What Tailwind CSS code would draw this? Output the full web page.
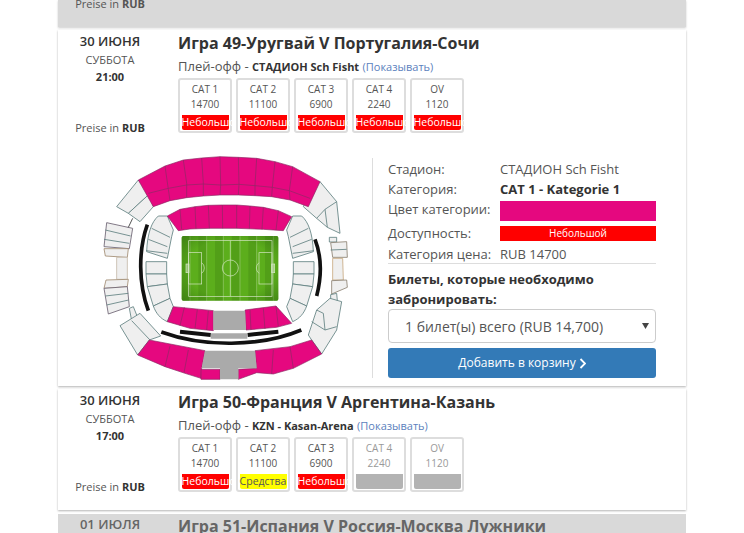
<!DOCTYPE html>
<html lang="ru">
<head>
<meta charset="UTF-8">
<title>Игры</title>
<script src="https://cdn.jsdelivr.net/npm/@tailwindcss/browser@4"></script>
</head>
<body class="bg-white overflow-hidden h-[533px] font-['Open_Sans','Noto_Sans',sans-serif] text-[#333]">
<div class="w-[628px] ml-[58px]">

  <!-- предыдущая игра -->
  <div class="h-[27px] bg-[#d9d9d9] shadow-[0_1px_2px_rgba(0,0,0,0.2)] flex">
    <div class="w-[104px] text-center text-[11px] leading-[8px] text-[#555]">Preise in <b>RUB</b></div>
  </div>

  <!-- игра 49 -->
  <div class="mt-[3px] bg-white shadow-[0_1px_2px_rgba(0,0,0,0.3)]">
    <div class="flex h-[117px]">
      <div class="w-[104px] flex flex-col items-center text-center">
        <div class="text-[13px] font-semibold leading-[18px] mt-[2px]">30 ИЮНЯ</div>
        <div class="text-[11px] leading-[16px] mt-[2px] text-[#555]">СУББОТА</div>
        <div class="text-[11px] font-bold leading-[16px] mt-[1px]">21:00</div>
        <div class="text-[11px] leading-[16px] mt-[35px] text-[#555]">Preise in <b class="text-[#333]">RUB</b></div>
      </div>
      <div class="ml-[16px]">
        <div class="text-[16px] font-bold leading-[22px] mt-[2px] whitespace-nowrap">Игра 49-Уругвай V Португалия-Сочи</div>
        <div class="text-[13px] h-[16px] leading-[16px] mt-[4px] whitespace-nowrap text-[#555]">Плей-офф - <b class="text-[11px] text-[#333]">СТАДИОН Sch Fisht</b> <span class="text-[11px] text-[#5b7fbd]">(Показывать)</span></div>
        <div class="flex gap-[4px] mt-[4px]">
          <div class="w-[54px] h-[55px] border-2 border-[#ddd] rounded-[3px] flex flex-col items-center text-[10px] leading-[15px] text-[#555] pt-[2px]"><span>CAT 1</span><span>14700</span><div class="mt-[3px] w-[47px] h-[15px] bg-[#ff0000] text-white text-[10.5px] leading-[15px] rounded-b-[2px] whitespace-nowrap text-left">Небольшой</div></div>
          <div class="w-[54px] h-[55px] border-2 border-[#ddd] rounded-[3px] flex flex-col items-center text-[10px] leading-[15px] text-[#555] pt-[2px]"><span>CAT 2</span><span>11100</span><div class="mt-[3px] w-[47px] h-[15px] bg-[#ff0000] text-white text-[10.5px] leading-[15px] rounded-b-[2px] whitespace-nowrap text-left">Небольшой</div></div>
          <div class="w-[54px] h-[55px] border-2 border-[#ddd] rounded-[3px] flex flex-col items-center text-[10px] leading-[15px] text-[#555] pt-[2px]"><span>CAT 3</span><span>6900</span><div class="mt-[3px] w-[47px] h-[15px] bg-[#ff0000] text-white text-[10.5px] leading-[15px] rounded-b-[2px] whitespace-nowrap text-left">Небольшой</div></div>
          <div class="w-[54px] h-[55px] border-2 border-[#ddd] rounded-[3px] flex flex-col items-center text-[10px] leading-[15px] text-[#555] pt-[2px]"><span>CAT 4</span><span>2240</span><div class="mt-[3px] w-[47px] h-[15px] bg-[#ff0000] text-white text-[10.5px] leading-[15px] rounded-b-[2px] whitespace-nowrap text-left">Небольшой</div></div>
          <div class="w-[54px] h-[55px] border-2 border-[#ddd] rounded-[3px] flex flex-col items-center text-[10px] leading-[15px] text-[#555] pt-[2px]"><span>OV</span><span>1120</span><div class="mt-[3px] w-[47px] h-[15px] bg-[#ff0000] text-white text-[10.5px] leading-[15px] rounded-b-[2px] whitespace-nowrap text-left">Небольшой</div></div>
        </div>
      </div>
    </div>

    <!-- схема стадиона и форма -->
    <div class="flex h-[239px]">
      <div class="w-[314px] shrink-0 pl-[32px] pt-[3px]">
        <svg width="280" height="235" viewBox="0 0 840 705">
          <defs>
            <pattern id="stripes" width="50" height="10" patternUnits="userSpaceOnUse" x="275">
              <rect width="25" height="10" fill="#529f18"/><rect x="25" width="25" height="10" fill="#5cae1c"/>
            </pattern>
            <radialGradient id="vig" cx="50%" cy="50%" r="68%">
              <stop offset="65%" stop-color="#2f6a10" stop-opacity="0"/><stop offset="100%" stop-color="#2f6a10" stop-opacity="0.5"/>
            </radialGradient>
            <g id="innerstand" fill="#efefef" stroke="#5f7f7f" stroke-width="2.5">
              <path d="M232 198L205 198C185 215 172 250 170 305L232 325L245 260L250 240Z"/>
              <path d="M185 235L240 262M175 268L232 290M168 302L232 310" fill="none"/>
              <path d="M168 335H230V372H168Z"/>
              <path d="M168 372H230L232 402L172 410Z"/>
              <path d="M172 410L232 402L240 445L190 468Z"/>
              <path d="M190 468L240 445L250 470L232 515C210 505 198 490 190 468Z"/>
            </g>
          </defs>

          <use href="#innerstand"/>
          <use href="#innerstand" transform="translate(840 0) scale(-1 1)"/>

          <!-- левая внешняя трибуна -->
          <g fill="#efefef" stroke="#5f7f7f" stroke-width="2.5">
            <path d="M80 170L145 90L178 132L115 190Z"/>
            <path d="M115 190L178 132L190 170L150 215Z"/>
            <path d="M50 218L128 235L118 296L42 290Z" stroke="#6a6070"/>
            <path d="M46 240L122 258M42 268L118 280"/>
            <path d="M42 296L115 296L112 322L46 318Z" stroke="#a08a70"/>
            <path d="M80 322L112 322L112 388L80 388Z" stroke="#c4b8a8"/>
            <path d="M48 390L115 388L112 410L42 415Z" stroke="#a08a70"/>
            <path d="M42 415L112 410L118 470L55 492Z" stroke="#6a6070"/>
            <path d="M46 438L115 430M50 465L116 450"/>
            <path d="M118 475L130 470L142 500L125 512Z"/>
            <path d="M90 527L150 490L212 558L178 570L143 615Z"/>
            <path d="M125 512L180 570"/>
            <path d="M128 205L115 232" fill="none" stroke="#333"/>
          </g>

          <!-- правая внешняя трибуна -->
          <g fill="#efefef" stroke="#5f7f7f" stroke-width="2.5">
            <path d="M660 125L690 95L740 155L750 250L712 232L680 205L640 170Z"/>
            <path d="M680 205L705 178L740 155M705 178L712 232" fill="none"/>
            <path d="M718 262L740 262L740 276L718 276Z"/>
            <path d="M722 278L770 275L772 322L728 322Z" stroke="#8a8070"/>
            <path d="M722 300L770 298" fill="none"/>
            <path d="M728 325H758L760 390H728Z" stroke="#c8a880"/>
            <path d="M725 392L770 390L772 412L725 432Z" stroke="#8a8070"/>
            <path d="M722 434L740 430L742 452L722 452Z"/>
            <path d="M655 555L680 480L720 445L755 455L740 540L695 612L665 570Z"/>
            <path d="M665 515L705 540L740 530M680 480L700 490L705 540" fill="none"/>
          </g>

          <g fill="#e5087f" stroke="#8b2a63" stroke-width="2">
            <path d="M145 90L225 48L280 30L335 24L390 20L445 22L500 25L555 35L608 50L690 95L655 170L600 150L545 140L495 137L445 135L390 135L340 138L290 143L240 152L190 170Z"/>
            <path fill="none" d="M225 48L235 118L240 152M280 30L290 100L290 143M335 24L340 100L340 138M390 20L392 105L390 135M445 22L447 103L445 135M500 25L495 105L495 137M555 35L547 112L545 140M608 50L598 122L600 150M175 130L235 115L290 105L340 102L392 105L447 103L495 107L547 112L598 122L660 145"/>
            <path d="M232 198L270 178L315 170L355 166L397 165L440 165L480 168L520 172L565 182L605 200L580 242L520 238L440 235L360 235L300 237L265 242Z"/>
            <path fill="none" d="M270 178L275 238M315 170L318 236M355 166L358 235M397 165L398 235M440 165L440 235M480 168L478 236M520 172L516 238M565 182L558 240"/>
            <path d="M232 515L250 470L370 482L370 542L300 535Z"/>
            <path fill="none" d="M283 472L270 527M322 478L315 535M355 482L350 540"/>
            <path d="M465 480L558 468L605 520L560 532L468 540Z"/>
            <path fill="none" d="M480 480L483 540M520 475L525 537M558 468L565 530"/>
            <path d="M178 570L345 602L335 655L333 685L285 670L225 650L143 615Z"/>
            <path fill="none" d="M240 588L225 650M295 600L282 668"/>
            <path d="M333 658H390V688H333Z"/>
            <path d="M495 602L600 590L665 570L695 612L610 655L550 672L500 668L445 688V658L500 655Z"/>
            <path fill="none" d="M550 600L545 672M600 590L610 655"/>
          </g>

          <g fill="#aaaaaa">
            <path d="M370 482H465L468 540H370Z"/>
            <path d="M345 602H495L500 655H445V688H390V655H335Z"/>
            <path d="M362 550H472V566H362Z"/>
          </g>

          <!-- чёрные полосы -->
          <g fill="none" stroke="#111">
            <path d="M172 224C145 300 145 400 175 482" stroke-width="11"/>
            <path d="M675 268C695 320 695 380 680 438" stroke-width="11"/>
            <path d="M214 546C340 592 510 592 634 540" stroke-width="11"/>
            <path d="M270 545L362 555M473 555L565 545" stroke-width="12"/>
          </g>

          <!-- поле -->
          <rect x="275" y="258" width="290" height="194" rx="5" fill="url(#stripes)"/>
          <rect x="275" y="258" width="290" height="194" rx="5" fill="url(#vig)"/>
          <g fill="none" stroke="#d8e8c8" stroke-width="2">
            <rect x="296" y="272" width="250" height="167"/>
            <path d="M421 272V439"/>
            <circle cx="421" cy="354" r="24"/>
            <rect x="296" y="308" width="39" height="94"/>
            <rect x="507" y="308" width="39" height="94"/>
            <rect x="288" y="342" width="9" height="26" fill="#d8e8c8" fill-opacity="0.5"/>
            <rect x="545" y="342" width="9" height="26" fill="#d8e8c8" fill-opacity="0.5"/>
            <path d="M335 338A20 20 0 0 1 335 370M507 338A20 20 0 0 0 507 370"/>
          </g>
        </svg>
      </div>
      <div class="mb-[8px] mt-[11px] border-l border-[#ddd] pl-[15px] w-[284px] text-[13px] text-[#555]">
        <div class="flex h-[20px] leading-[20px] mt-[1px]"><div class="w-[112px]">Стадион:</div><div>СТАДИОН Sch Fisht</div></div>
        <div class="flex h-[20px] leading-[20px]"><div class="w-[112px]">Категория:</div><div class="font-bold text-[#333]">CAT 1 - Kategorie 1</div></div>
        <div class="flex h-[25px] leading-[20px]"><div class="w-[112px]">Цвет категории:</div><div class="w-[156px] h-[20px] mt-[2px] bg-[#e5087f]"></div></div>
        <div class="flex h-[20px] leading-[18px]"><div class="w-[112px]">Доступность:</div><div class="w-[156px] h-[15px] mt-[2px] bg-[#ff0000] text-white text-[10px] leading-[15px] text-center">Небольшой</div></div>
        <div class="flex h-[20px] leading-[20px] w-[268px] border-b border-[#ddd]"><div class="w-[112px]">Категория цена:</div><div>RUB 14700</div></div>
        <div class="font-bold leading-[20px] text-[#333] mt-[5px] w-[268px]">Билеты, которые необходимо забронировать:</div>
        <div class="relative w-[268px]">
          <select class="appearance-none w-full h-[34px] border border-[#ccc] rounded-[4px] bg-white pl-[16px] text-[14px] text-[#555]">
            <option>1 билет(ы) всего (RUB 14,700)</option>
          </select>
          <svg class="absolute right-[7px] top-[14px]" width="7" height="6" viewBox="0 0 7 6"><path d="M0 0H7L3.5 6Z" fill="#444"/></svg>
        </div>
        <div class="w-[268px] h-[30px] mt-[5px] bg-[#337ab7] rounded-[3px] text-white text-[12px] flex items-center justify-center gap-[3px]">Добавить в корзину
          <svg width="7" height="11" viewBox="0 0 7 11"><path d="M1.5 1L6 5.5L1.5 10" fill="none" stroke="#fff" stroke-width="1.8"/></svg>
        </div>
      </div>
    </div>
  </div>

  <!-- игра 50 -->
  <div class="mt-[3px] h-[121px] bg-white shadow-[0_1px_2px_rgba(0,0,0,0.3)] flex">
    <div class="w-[104px] flex flex-col items-center text-center">
      <div class="text-[13px] font-semibold leading-[18px] mt-[2px]">30 ИЮНЯ</div>
      <div class="text-[11px] leading-[16px] mt-[2px] text-[#555]">СУББОТА</div>
      <div class="text-[11px] font-bold leading-[16px] mt-[1px]">17:00</div>
      <div class="text-[11px] leading-[16px] mt-[35px] text-[#555]">Preise in <b class="text-[#333]">RUB</b></div>
    </div>
    <div class="ml-[16px]">
      <div class="text-[16px] font-bold leading-[22px] mt-[2px] whitespace-nowrap">Игра 50-Франция V Аргентина-Казань</div>
      <div class="text-[13px] h-[16px] leading-[16px] mt-[4px] whitespace-nowrap text-[#555]">Плей-офф - <b class="text-[11px] text-[#333]">KZN - Kasan-Arena</b> <span class="text-[11px] text-[#5b7fbd]">(Показывать)</span></div>
      <div class="flex gap-[4px] mt-[4px]">
        <div class="w-[54px] h-[55px] border-2 border-[#ddd] rounded-[3px] flex flex-col items-center text-[10px] leading-[15px] text-[#555] pt-[2px]"><span>CAT 1</span><span>14700</span><div class="mt-[3px] w-[47px] h-[15px] bg-[#ff0000] text-white text-[10.5px] leading-[15px] rounded-b-[2px] whitespace-nowrap text-left">Небольшой</div></div>
        <div class="w-[54px] h-[55px] border-2 border-[#ddd] rounded-[3px] flex flex-col items-center text-[10px] leading-[15px] text-[#555] pt-[2px]"><span>CAT 2</span><span>11100</span><div class="mt-[3px] w-[47px] h-[15px] bg-[#ffff00] text-[#555] text-[10.5px] leading-[15px] rounded-b-[2px] whitespace-nowrap text-center">Средства</div></div>
        <div class="w-[54px] h-[55px] border-2 border-[#ddd] rounded-[3px] flex flex-col items-center text-[10px] leading-[15px] text-[#555] pt-[2px]"><span>CAT 3</span><span>6900</span><div class="mt-[3px] w-[47px] h-[15px] bg-[#ff0000] text-white text-[10.5px] leading-[15px] rounded-b-[2px] whitespace-nowrap text-left">Небольшой</div></div>
        <div class="w-[54px] h-[55px] border-2 border-[#ddd] rounded-[3px] flex flex-col items-center text-[10px] leading-[15px] text-[#999] pt-[2px]"><span>CAT 4</span><span>2240</span><div class="mt-[3px] w-[47px] h-[15px] bg-[#b3b3b3] rounded-b-[2px]"></div></div>
        <div class="w-[54px] h-[55px] border-2 border-[#ddd] rounded-[3px] flex flex-col items-center text-[10px] leading-[15px] text-[#999] pt-[2px]"><span>OV</span><span>1120</span><div class="mt-[3px] w-[47px] h-[15px] bg-[#b3b3b3] rounded-b-[2px]"></div></div>
      </div>
    </div>
  </div>

  <!-- игра 51 -->
  <div class="mt-[4px] h-[40px] bg-[#d9d9d9] flex text-[#666]">
    <div class="w-[104px] text-center text-[13px] font-semibold leading-[18px] mt-[1px]">01 ИЮЛЯ</div>
    <div class="ml-[16px] text-[16px] font-bold leading-[22px] mt-[1px] whitespace-nowrap">Игра 51-Испания V Россия-Москва Лужники</div>
  </div>
</div>
</body>
</html>
